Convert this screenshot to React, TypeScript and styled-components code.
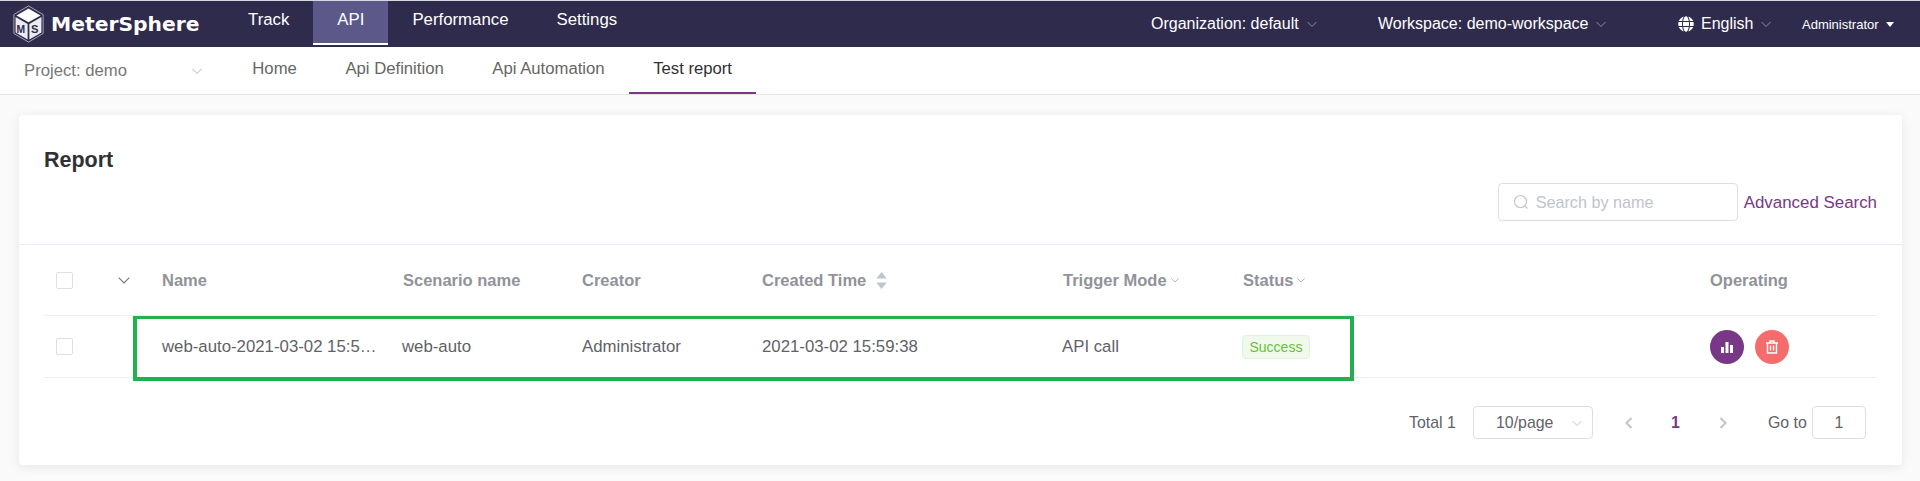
import React from "react";
import styled, { createGlobalStyle } from "styled-components";
import { FaGlobe } from "react-icons/fa";

const GlobalStyle = createGlobalStyle`
  html, body {
    margin: 0;
    padding: 0;
    background: #fafafa;
    font-family: "Liberation Sans", Arial, sans-serif;
  }
  * {
    box-sizing: border-box;
  }
`;

const Chevron: React.FC<{ size?: number; color?: string }> = ({ size = 12, color = "#8d8aa3" }) => (
  <svg width={size} height={size} viewBox="0 0 12 12" fill="none" stroke={color} strokeWidth="1">
    <path d="M1.5 4 L6 8.5 L10.5 4" />
  </svg>
);

const App: React.FC = () => {
  return (
    <>
      <GlobalStyle />
      <Page>
        <TopBar>
          <Logo>
            <svg width="31" height="38" viewBox="0 0 36 44">
              <path d="M18 1 L35 11 V33 L18 43 L1 33 V11 Z" fill="none" stroke="#b9b7c8" strokeWidth="1" />
              <path d="M18 4 L32 12 L18 20 L4 12 Z" fill="#fff" />
              <path d="M3 14 L17 22 V40 L3 32 Z" fill="#ecebf1" />
              <path d="M33 14 L19 22 V40 L33 32 Z" fill="#ecebf1" />
              <text x="4" y="32" fontSize="12" fontWeight="700" fill="#2f2b4d" fontFamily="Liberation Sans">M</text>
              <text x="21" y="32" fontSize="13" fontWeight="700" fill="#2f2b4d" fontFamily="Liberation Sans">S</text>
            </svg>
            <LogoText>MeterSphere</LogoText>
          </Logo>
          <TopTab>Track</TopTab>
          <TopTab $active>API</TopTab>
          <TopTab>Performance</TopTab>
          <TopTab>Settings</TopTab>
          <TopRight>
            <TopMenu $width={227}>
              Organization: default <Chevron />
            </TopMenu>
            <TopMenu $width={300}>
              Workspace: demo-workspace <Chevron />
            </TopMenu>
            <TopMenu $width={124}>
              <FaGlobe size={16} /> English <Chevron />
            </TopMenu>
            <UserMenu>
              Administrator <Caret />
            </UserMenu>
          </TopRight>
        </TopBar>
        <SubBar>
          <ProjectSelect>
            Project: demo <Chevron color="#b5b3c4" />
          </ProjectSelect>
          <SubTab>Home</SubTab>
          <SubTab>Api Definition</SubTab>
          <SubTab>Api Automation</SubTab>
          <SubTab $active>Test report</SubTab>
        </SubBar>
        <Content>
          <Card>
            <CardHeader>
              <Title>Report</Title>
              <SearchRow>
                <SearchBox>
                  <svg width="16" height="16" viewBox="0 0 16 16" fill="none" stroke="#c4c4d0" strokeWidth="1.2">
                    <circle cx="7.5" cy="7.5" r="6" />
                    <path d="M12 12 L14.5 14.5" />
                  </svg>
                  <Placeholder>Search by name</Placeholder>
                </SearchBox>
                <AdvancedLink>Advanced Search</AdvancedLink>
              </SearchRow>
            </CardHeader>
            <TableWrap>
              <HeadRow>
                <Cell><Checkbox /></Cell>
                <ExpandCell><Chevron size={14} color="#77768a" /></ExpandCell>
                <HeadCell>Name</HeadCell>
                <HeadCell>Scenario name</HeadCell>
                <HeadCell>Creator</HeadCell>
                <HeadCell>
                  Created Time
                  <SortIcon viewBox="0 0 12 18">
                    <path d="M6 1 L11 7 H1 Z" />
                    <path d="M6 17 L11 11 H1 Z" />
                  </SortIcon>
                </HeadCell>
                <HeadCell>Trigger Mode<Chevron size={10} color="#a5a5b3" /></HeadCell>
                <HeadCell>Status<Chevron size={10} color="#a5a5b3" /></HeadCell>
                <HeadCell>Operating</HeadCell>
              </HeadRow>
              <BodyRow>
                <Cell><Checkbox /></Cell>
                <Cell />
                <Cell>web-auto-2021-03-02 15:5…</Cell>
                <Cell $nudge>web-auto</Cell>
                <Cell>Administrator</Cell>
                <Cell>2021-03-02 15:59:38</Cell>
                <Cell $nudge>API call</Cell>
                <Cell $nudge><SuccessTag>Success</SuccessTag></Cell>
                <Cell>
                  <RoundButton $color="#783887">
                    <svg width="14" height="14" viewBox="0 0 14 14" fill="#fff">
                      <rect x="1" y="7" width="3" height="6" />
                      <rect x="5.5" y="2" width="3" height="11" />
                      <rect x="10" y="5" width="3" height="8" />
                    </svg>
                  </RoundButton>
                  <RoundButton $color="#f56c6c">
                    <svg width="14" height="14" viewBox="0 0 14 14" fill="none" stroke="#fff" strokeWidth="1.4">
                      <path d="M1 3 H13 M5 3 V1 H9 V3" />
                      <path d="M2.5 3 V13 H11.5 V3" />
                      <path d="M5.5 5.5 V10.5 M8.5 5.5 V10.5" />
                    </svg>
                  </RoundButton>
                </Cell>
              </BodyRow>
              <Highlight />
            </TableWrap>
            <Pager>
              <PagerText>Total 1</PagerText>
              <PageSize>
                10/page
                <Chevron color="#c0c4cc" />
              </PageSize>
              <PagerArrow>
                <svg width="12" height="14" viewBox="0 0 12 14" fill="none" stroke="#c0c4cc" strokeWidth="2">
                  <path d="M8.5 2 L3.5 7 L8.5 12" />
                </svg>
              </PagerArrow>
              <PageNumber>1</PageNumber>
              <PagerArrow>
                <svg width="12" height="14" viewBox="0 0 12 14" fill="none" stroke="#c0c4cc" strokeWidth="2">
                  <path d="M3.5 2 L8.5 7 L3.5 12" />
                </svg>
              </PagerArrow>
              <GoTo>Go to</GoTo>
              <GoInput>1</GoInput>
            </Pager>
          </Card>
        </Content>
      </Page>
    </>
  );
};

const Page = styled.div`
  width: 1920px;
  height: 481px;
  overflow: hidden;
  background: #fafafa;
`;

const TopBar = styled.header`
  display: flex;
  height: 47px;
  padding-top: 1px;
  background: #2f2b4d;
  color: #fff;
  font-size: 16px;
  box-shadow: inset 0 1px 0 #d8d8e0;
`;

const Logo = styled.div`
  display: flex;
  align-items: center;
  gap: 7px;
  width: 224px;
  padding-left: 13px;
`;

const LogoText = styled.span`
  font-family: "DejaVu Sans", sans-serif;
  font-weight: 700;
  font-size: 20.3px;
`;

const TopTab = styled.div<{ $active?: boolean }>`
  display: flex;
  align-items: center;
  height: 44px;
  padding: 0 24px 4px;
  font-size: 16.8px;
  background: ${(p) => (p.$active ? "#5c5889" : "transparent")};
  border-bottom: 2px solid ${(p) => (p.$active ? "#fff" : "transparent")};
`;

const TopRight = styled.div`
  display: flex;
  align-items: center;
  margin-left: auto;
`;

const TopMenu = styled.div<{ $width: number }>`
  display: flex;
  align-items: center;
  gap: 7px;
  width: ${(p) => p.$width}px;
`;

const UserMenu = styled.div`
  display: flex;
  align-items: center;
  gap: 7px;
  width: 118px;
  font-size: 13px;
`;

const Caret = styled.i`
  width: 0;
  height: 0;
  border-left: 4px solid transparent;
  border-right: 4px solid transparent;
  border-top: 5px solid #fff;
`;

const SubBar = styled.nav`
  display: flex;
  height: 48px;
  background: #fff;
  border-bottom: 1px solid #e6e6e6;
  color: #666;
  font-size: 16.7px;
`;

const ProjectSelect = styled.div`
  display: flex;
  align-items: center;
  justify-content: space-between;
  width: 228px;
  padding: 0 25px 0 24px;
  color: #777;
`;

const SubTab = styled.div<{ $active?: boolean }>`
  display: flex;
  align-items: center;
  height: 47px;
  padding: 0 24.3px 2px;
  color: ${(p) => (p.$active ? "#303133" : "#666")};
  border-bottom: 2px solid ${(p) => (p.$active ? "#783887" : "transparent")};
`;

const Content = styled.main`
  padding: 20px 18px 0 19px;
`;

const Card = styled.section`
  height: 350px;
  background: #fff;
  border-radius: 4px;
  box-shadow: 0 2px 12px rgba(0, 0, 0, 0.08);
`;

const CardHeader = styled.div`
  height: 130px;
  padding: 32px 25px 0;
  border-bottom: 1px solid #ebeef5;
`;

const Title = styled.h2`
  margin: 0;
  font-size: 21.5px;
  line-height: 26px;
  color: #303133;
`;

const SearchRow = styled.div`
  display: flex;
  justify-content: flex-end;
  align-items: center;
  gap: 6px;
  margin-top: 10px;
`;

const SearchBox = styled.div`
  display: flex;
  align-items: center;
  gap: 7px;
  width: 240px;
  height: 38px;
  padding-left: 14px;
  border: 1px solid #dcdfe6;
  border-radius: 4px;
`;

const Placeholder = styled.span`
  color: #c0c4cc;
  font-size: 16.2px;
`;

const AdvancedLink = styled.a`
  padding-top: 2px;
  color: #783887;
  font-size: 16.9px;
`;

const TableWrap = styled.div`
  position: relative;
  margin: 0 25px;
`;

const HeadRow = styled.div`
  display: grid;
  grid-template-columns: 62px 56px 241px 179px 180px 301px 180px 467px 167px;
  align-items: center;
  height: 71px;
  border-bottom: 1px solid #ebeef5;
`;

const BodyRow = styled(HeadRow)`
  height: 62px;
  color: #606266;
  font-size: 16.8px;
`;

const Cell = styled.div<{ $nudge?: boolean }>`
  display: flex;
  align-items: center;
  gap: 11px;
  margin-left: ${(p) => (p.$nudge ? "-1px" : "0")};
  white-space: nowrap;
  &:first-child {
    padding-left: 12px;
  }
`;

const ExpandCell = styled(Cell)`
  padding-left: 11px;
`;

const HeadCell = styled(Cell)`
  gap: 3px;
  color: #909399;
  font-size: 16.5px;
  font-weight: 700;
`;

const SortIcon = styled.svg`
  width: 13px;
  height: 19px;
  margin-left: 6px;
  fill: #c0c4cc;
`;

const Checkbox = styled.span`
  display: block;
  width: 17px;
  height: 17px;
  border: 1px solid #dcdfe6;
  border-radius: 2px;
  background: #fff;
`;

const SuccessTag = styled.span`
  display: inline-flex;
  align-items: center;
  height: 24px;
  padding: 0 6.5px;
  color: #67c23a;
  font-size: 14px;
  background: #f0f9eb;
  border: 1px solid #e1f3d8;
  border-radius: 4px;
`;

const RoundButton = styled.span<{ $color: string }>`
  display: flex;
  align-items: center;
  justify-content: center;
  width: 34px;
  height: 34px;
  border-radius: 50%;
  background: ${(p) => p.$color};
`;

const Highlight = styled.div`
  position: absolute;
  left: 89px;
  top: 71px;
  width: 1221px;
  height: 65px;
  border-style: solid;
  border-color: #22b14c;
  border-width: 3px 4px 4px;
  pointer-events: none;
`;

const Pager = styled.div`
  display: flex;
  align-items: center;
  height: 33px;
  margin-top: 28px;
  padding-left: 1390px;
  color: #606266;
  font-size: 15.9px;
`;

const PagerText = styled.span`
  width: 64px;
`;

const PageSize = styled.div`
  display: flex;
  align-items: center;
  justify-content: space-between;
  width: 120px;
  height: 33px;
  margin-right: 12px;
  padding: 0 9px 0 22px;
  border: 1px solid #dcdfe6;
  border-radius: 4px;
`;

const PagerArrow = styled.span`
  display: flex;
  justify-content: center;
  width: 47px;
`;

const PageNumber = styled.b`
  width: 47px;
  color: #783887;
  text-align: center;
`;

const GoTo = styled.span`
  margin-left: 22px;
  margin-right: 5px;
`;

const GoInput = styled.span`
  display: flex;
  align-items: center;
  justify-content: center;
  width: 54px;
  height: 33px;
  border: 1px solid #dcdfe6;
  border-radius: 4px;
`;

export default App;
